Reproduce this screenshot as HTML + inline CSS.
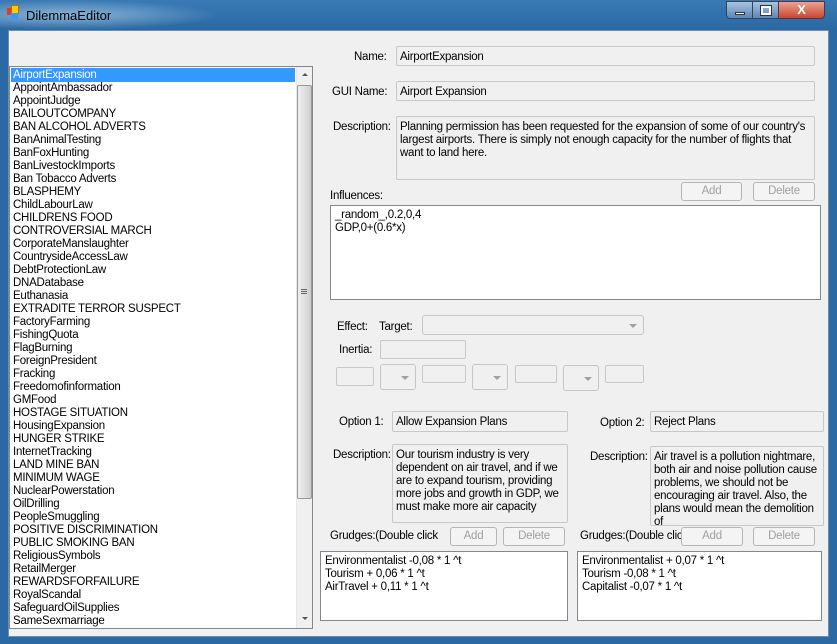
<!DOCTYPE html><html><head><style>
*{margin:0;padding:0;box-sizing:border-box}
body{width:837px;height:644px;overflow:hidden;background:#2a69a3;font-family:"Liberation Sans",sans-serif;font-size:11.5px;letter-spacing:-0.25px;color:#000;position:relative}
.a{position:absolute}
.tb{background:#f0f0f0;border:1px solid #c8c8c8;border-radius:2px;padding:4px 3px 2px;line-height:13px;color:#000;overflow:hidden}
.w{background:#fff;border:1px solid #828790;padding:3px 4px;line-height:13px}
.btn{border:1px solid #b5b5b5;border-radius:3px;background:#f4f4f4;color:#a0a0a0;text-align:center;line-height:17px}
.cb{border:1px solid #c5c5c5;border-radius:3px;background:#f0f0f0}
.cb:after{content:"";position:absolute;right:6px;top:50%;margin-top:-1px;border:4px solid transparent;border-top:4px solid #a0a0a0;border-bottom:0}
.lbl{position:absolute;line-height:13px;white-space:nowrap;margin-top:1px}
</style></head><body>
<div class="a" style="left:0;top:0;width:837px;height:30px;background:linear-gradient(#3a7ab4,#2a69a3)"></div>
<div class="a" style="left:0;top:0;width:220px;height:30px;background:radial-gradient(ellipse at 30% 50%,rgba(200,225,245,.6),rgba(200,225,245,0) 70%)"></div>
<div class="a" style="left:7px;top:8px;width:7px;height:7px;background:#e33"></div>
<div class="a" style="left:11px;top:5px;width:8px;height:9px;background:#fc0;border:1px solid #a70"></div>
<div class="a" style="left:11px;top:13px;width:7px;height:6px;background:#39f"></div>
<div class="lbl" style="left:26px;top:8px;font-size:13px;letter-spacing:0;color:#000">DilemmaEditor</div>
<div class="a" style="left:726px;top:1px;width:27px;height:18px;border:1px solid #345;border-radius:0 0 0 4px;background:linear-gradient(#a9c3de,#5d87b6)"><div class="a" style="left:8px;top:10px;width:10px;height:3px;background:#fff;border:1px solid #333"></div></div>
<div class="a" style="left:752px;top:1px;width:27px;height:18px;border:1px solid #345;background:linear-gradient(#a9c3de,#5d87b6)"><div class="a" style="left:8px;top:4px;width:10px;height:9px;border:2px solid #fff;outline:1px solid #333"></div></div>
<div class="a" style="left:778px;top:1px;width:47px;height:18px;border:1px solid #534;border-radius:0 0 4px 0;background:linear-gradient(#e8a493,#c9472f);color:#fff;font-weight:bold;text-align:center;font-size:13px;line-height:16px">X</div>
<div class="a" style="left:8px;top:30px;width:821px;height:607px;background:#f0f0f0;border:1px solid #6a8db0"></div>
<!-- list -->
<div class="a" style="left:9px;top:66px;width:304px;height:563px;background:#fff;border:1px solid #828790;overflow:hidden">
<div class="a" style="left:1px;top:1px;width:284px;height:14px;background:#3399ff"></div>
<div class="a" style="left:3px;top:2px;line-height:13px;white-space:pre"><span style="color:#fff">AirportExpansion</span>
AppointAmbassador
AppointJudge
BAILOUTCOMPANY
BAN ALCOHOL ADVERTS
BanAnimalTesting
BanFoxHunting
BanLivestockImports
Ban Tobacco Adverts
BLASPHEMY
ChildLabourLaw
CHILDRENS FOOD
CONTROVERSIAL MARCH
CorporateManslaughter
CountrysideAccessLaw
DebtProtectionLaw
DNADatabase
Euthanasia
EXTRADITE TERROR SUSPECT
FactoryFarming
FishingQuota
FlagBurning
ForeignPresident
Fracking
Freedomofinformation
GMFood
HOSTAGE SITUATION
HousingExpansion
HUNGER STRIKE
InternetTracking
LAND MINE BAN
MINIMUM WAGE
NuclearPowerstation
OilDrilling
PeopleSmuggling
POSITIVE DISCRIMINATION
PUBLIC SMOKING BAN
ReligiousSymbols
RetailMerger
REWARDSFORFAILURE
RoyalScandal
SafeguardOilSupplies
SameSexmarriage</div>
<div class="a" style="left:286px;top:0;width:17px;height:561px;background:#f0f0f0;border-left:1px solid #e6e6e6"></div>
<div class="a" style="left:292px;top:6px;border:3px solid transparent;border-bottom:3px solid #555;border-top:0"></div>
<div class="a" style="left:292px;top:550px;border:3px solid transparent;border-top:3px solid #555;border-bottom:0"></div>
<div class="a" style="left:287px;top:18px;width:15px;height:414px;border:1px solid #999;border-radius:2px;background:linear-gradient(90deg,#eee,#ddd 60%,#ccc)"></div>
<div class="a" style="left:291px;top:222px;width:6px;height:5px;border-top:1px solid #666;border-bottom:1px solid #666"><div style="margin-top:1px;border-top:1px solid #666"></div></div>
</div>
<!-- right -->
<div class="lbl" style="left:354px;top:50px">Name:</div>
<div class="a tb" style="left:396px;top:46px;width:419px;height:20px">AirportExpansion</div>
<div class="lbl" style="left:332px;top:85px">GUI Name:</div>
<div class="a tb" style="left:396px;top:81px;width:419px;height:20px">Airport Expansion</div>
<div class="lbl" style="left:333px;top:120px">Description:</div>
<div class="a tb" style="left:396px;top:116px;width:419px;height:64px">Planning permission has been requested for the expansion of some of our country's largest airports. There is simply not enough capacity for the number of flights that want to land here.</div>
<div class="a btn" style="left:681px;top:182px;width:61px;height:19px">Add</div>
<div class="a btn" style="left:753px;top:182px;width:62px;height:19px">Delete</div>
<div class="lbl" style="left:330px;top:189px">Influences:</div>
<div class="a w" style="left:330px;top:205px;width:491px;height:95px">_random_,0.2,0,4<br>GDP,0+(0.6*x)</div>
<div class="lbl" style="left:337px;top:320px">Effect:</div>
<div class="lbl" style="left:379px;top:320px">Target:</div>
<div class="a cb" style="left:422px;top:315px;width:222px;height:20px"></div>
<div class="lbl" style="left:339px;top:343px">Inertia:</div>
<div class="a tb" style="left:380px;top:340px;width:86px;height:19px"></div>
<div class="a tb" style="left:336px;top:367px;width:38px;height:19px"></div>
<div class="a cb" style="left:380px;top:364px;width:36px;height:26px"></div>
<div class="a tb" style="left:422px;top:365px;width:44px;height:18px"></div>
<div class="a cb" style="left:472px;top:364px;width:36px;height:26px"></div>
<div class="a tb" style="left:515px;top:365px;width:42px;height:18px"></div>
<div class="a cb" style="left:563px;top:365px;width:36px;height:26px"></div>
<div class="a tb" style="left:605px;top:365px;width:39px;height:18px"></div>
<div class="lbl" style="left:339px;top:415px">Option 1:</div>
<div class="a tb" style="left:392px;top:411px;width:176px;height:21px">Allow Expansion Plans</div>
<div class="lbl" style="left:600px;top:416px">Option 2:</div>
<div class="a tb" style="left:650px;top:411px;width:174px;height:21px">Reject Plans</div>
<div class="lbl" style="left:333px;top:448px">Description:</div>
<div class="a tb" style="left:392px;top:444px;width:176px;height:79px">Our tourism industry is very dependent on air travel, and if we are to expand tourism, providing more jobs and growth in GDP, we must make more air capacity</div>
<div class="lbl" style="left:590px;top:450px">Description:</div>
<div class="a tb" style="left:650px;top:446px;width:174px;height:80px">Air travel is a pollution nightmare, both air and noise pollution cause problems, we should not be encouraging air travel. Also, the plans would mean the demolition of</div>
<div class="lbl" style="left:330px;top:529px;width:120px;overflow:hidden">Grudges:(Double click</div>
<div class="a btn" style="left:450px;top:527px;width:47px;height:19px">Add</div>
<div class="a btn" style="left:503px;top:527px;width:62px;height:19px">Delete</div>
<div class="lbl" style="left:580px;top:529px;width:101px;overflow:hidden">Grudges:(Double click</div>
<div class="a btn" style="left:681px;top:527px;width:62px;height:19px">Add</div>
<div class="a btn" style="left:753px;top:527px;width:62px;height:19px">Delete</div>
<div class="a w" style="left:320px;top:551px;width:248px;height:70px">Environmentalist -0,08 * 1 ^t<br>Tourism + 0,06 * 1 ^t<br>AirTravel + 0,11 * 1 ^t</div>
<div class="a w" style="left:577px;top:551px;width:245px;height:70px">Environmentalist + 0,07 * 1 ^t<br>Tourism -0,08 * 1 ^t<br>Capitalist -0,07 * 1 ^t</div>
</body></html>
